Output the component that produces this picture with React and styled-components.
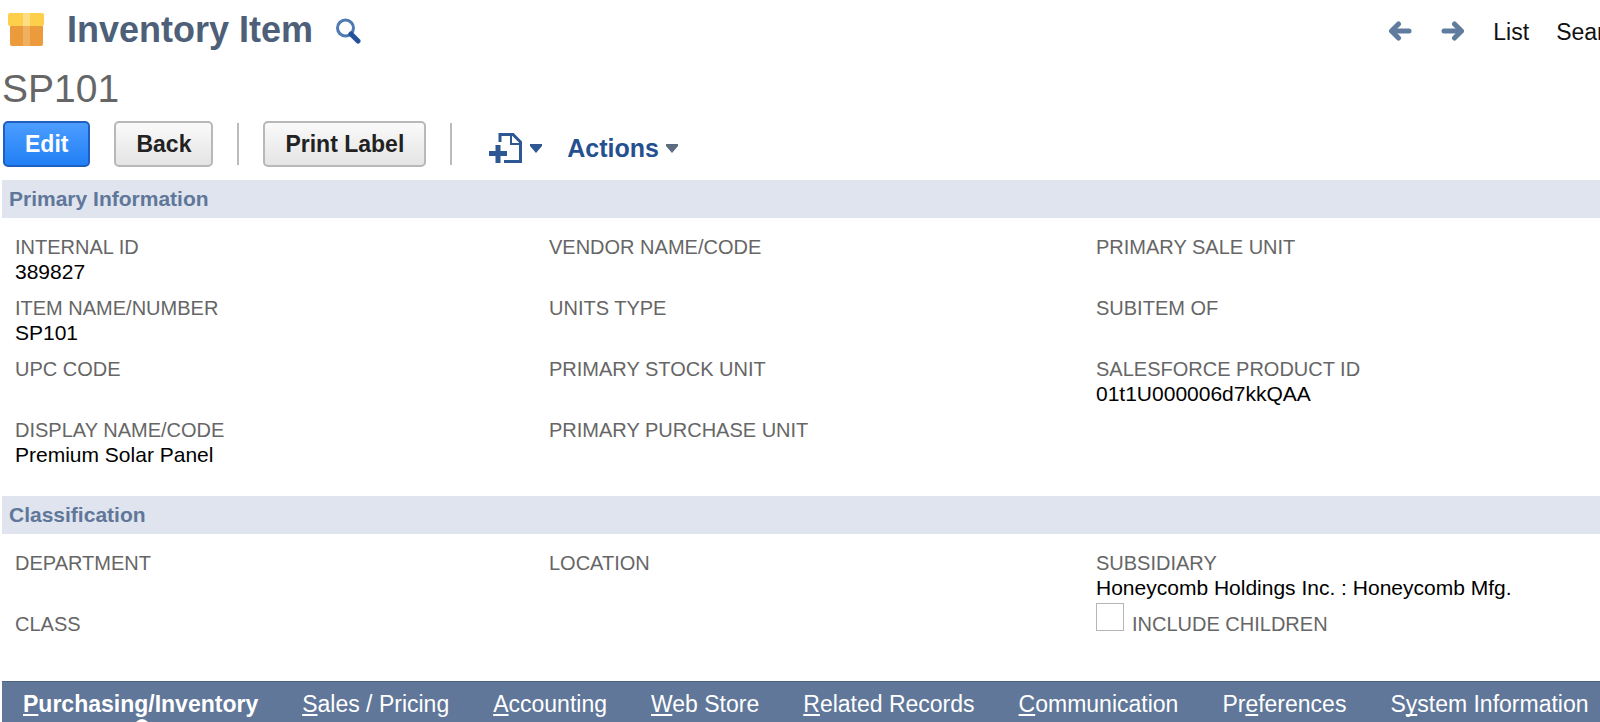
import React from "react";
import styled, { createGlobalStyle } from "styled-components";

const GlobalStyle = createGlobalStyle`
  *, *::before, *::after { box-sizing: border-box; }
  body {
    margin: 0;
    background: #fff;
    color: #000;
    font-family: "Liberation Sans", Arial, sans-serif;
    overflow-x: hidden;
  }
`;

const Page = styled.main`
  overflow: hidden;
`;

const Header = styled.header`
  display: flex;
  align-items: center;
  height: 60px;
  padding-left: 8px;
`;

const Title = styled.h1`
  margin: 0 22px 0 22px;
  font-size: 36px;
  line-height: 40px;
  font-weight: bold;
  color: #4d5f79;
  white-space: nowrap;
`;

const IconButton = styled.button`
  display: flex;
  align-items: center;
  gap: 8px;
  padding: 0;
  border: 0;
  background: none;
  cursor: pointer;
`;

const HeaderNav = styled.nav`
  display: flex;
  align-items: center;
  gap: 27px;
  margin: 3px -29px 0 auto;
`;

const NavLink = styled.a`
  font-size: 23px;
  line-height: 28px;
  color: #111;
  text-decoration: none;
`;

const RecordName = styled.h2`
  margin: 0;
  padding: 6px 2px 0;
  font-size: 39px;
  line-height: 46px;
  font-weight: normal;
  color: #666;
`;

const Toolbar = styled.div`
  display: flex;
  align-items: center;
  height: 68px;
  padding: 0 3px 4px;
`;

const Button = styled.button`
  height: 46px;
  padding: 0 20px;
  border: 2px solid ${(p) => (p.$primary ? "#1f5fc0" : "#b8b8b8")};
  border-radius: 5px;
  background: ${(p) =>
    p.$primary
      ? "linear-gradient(#4c9dff, #2180f5)"
      : "linear-gradient(#fafafa, #e4e4e4)"};
  color: ${(p) => (p.$primary ? "#fff" : "#222")};
  font: bold 23px "Liberation Sans", Arial, sans-serif;
  cursor: pointer;

  & + & { margin-left: 24px; }
`;

const Divider = styled.span`
  width: 2px;
  height: 42px;
  margin: 0 24px;
  background: #bbb;
`;

const ToolbarMenus = styled.div`
  display: flex;
  align-items: center;
  gap: 25px;
  margin: 8px 0 0 13px;
`;

const MenuButton = styled(IconButton)`
  gap: 7px;
  font: bold 25px "Liberation Sans", Arial, sans-serif;
  color: #24508f;
`;

const SectionTitle = styled.h3`
  margin: 0 0 0 2px;
  padding: 0 7px;
  background: #dfe4ef;
  color: #607799;
  font-size: 21px;
  line-height: 38px;
  font-weight: bold;
`;

const Fields = styled.div`
  display: grid;
  grid-template-columns: 534fr 547fr 504fr;
  padding: 17px 0 ${(p) => p.$bottom}px 15px;
`;

const Column = styled.dl`
  margin: 0;
`;

const FieldBox = styled.div`
  height: ${(p) => (p.$compact ? 52 : 61)}px;
  white-space: nowrap;
`;

const FieldLabel = styled.dt`
  font-size: 20px;
  line-height: 24px;
  color: #666;
`;

const FieldValue = styled.dd`
  margin: 0;
  font-size: 21px;
  line-height: 26px;
  color: #000;
`;

const CheckRow = styled.div`
  display: flex;
  align-items: flex-end;
  gap: 8px;
`;

const Checkbox = styled.input`
  appearance: none;
  width: 28px;
  height: 28px;
  margin: 0;
  border: 1px solid #b5b5b5;
  background: #fff;
`;

const CheckLabel = styled.label`
  font-size: 20px;
  line-height: 14px;
  color: #666;
`;

const Tabs = styled.nav`
  display: flex;
  gap: 44px;
  height: 41px;
  margin-left: 2px;
  padding: 0 21px;
  border-top: 1px solid #4c6585;
  background: #607799;
`;

const Tab = styled.a`
  position: relative;
  font-size: 23px;
  line-height: 44px;
  font-weight: ${(p) => (p.$active ? "bold" : "normal")};
  color: #fff;
  text-decoration: none;
  white-space: nowrap;
`;

const AccessKey = styled.span`
  text-decoration: underline;
  text-decoration-thickness: 2px;
  text-decoration-skip-ink: none;
  text-underline-offset: 2px;
`;

const Pointer = styled.svg`
  position: absolute;
  left: 50%;
  bottom: 0;
  margin-left: -6px;
`;

const BoxIcon = () => (
  <svg width="37" height="34" viewBox="0 0 37 34" aria-hidden="true">
    <rect x="2" y="12" width="33" height="21" rx="2" fill="#eb9b3c" />
    <rect x="15" y="12" width="7" height="21" fill="#f0b060" />
    <rect x="0" y="0" width="36" height="13" rx="2" fill="#fdcf4b" />
    <rect x="15" y="0" width="7" height="13" fill="#fedd83" />
  </svg>
);

const SearchIcon = () => (
  <svg width="26" height="28" viewBox="0 -2 26 28" fill="none" aria-hidden="true">
    <circle cx="10.500" cy="10" r="8" stroke="#4f79b2" strokeWidth="3" />
    <path d="M16 16L23 23" stroke="#24529a" strokeWidth="5" strokeLinecap="round" />
  </svg>
);

const ArrowIcon = ({ right }) => (
  <svg width="26" height="22" viewBox="0 0 26 22" fill="none" stroke="#5f7c9f" strokeWidth="5" strokeLinecap="round" strokeLinejoin="round" aria-hidden="true">
    <g transform={right ? "translate(26 0) scale(-1 1)" : undefined}>
      <path d="M5 10H22" />
      <path d="M11.500 3L4.500 10L11.500 17" />
    </g>
  </svg>
);

const NewRecordIcon = () => (
  <svg width="34" height="30" viewBox="0 0 34 30" fill="none" stroke="#2d5893" aria-hidden="true">
    <path d="M11 9V1.500H24L31.500 9V28.500H15" strokeWidth="3" />
    <path d="M22 2V11H31" strokeWidth="2" />
    <path d="M0 20.500H18M9 12V30" strokeWidth="5" />
  </svg>
);

const Caret = ({ color }) => (
  <svg width="12" height="9" viewBox="0 0 12 9" aria-hidden="true">
    <path d="M0 0H12V2L6 9L0 2Z" fill={color} />
  </svg>
);

const Field = ({ label, value, compact }) => (
  <FieldBox $compact={compact}>
    <FieldLabel>{label}</FieldLabel>
    <FieldValue>{value}</FieldValue>
  </FieldBox>
);

const primaryColumns = [
  [
    ["INTERNAL ID", "389827"],
    ["ITEM NAME/NUMBER", "SP101"],
    ["UPC CODE"],
    ["DISPLAY NAME/CODE", "Premium Solar Panel"],
  ],
  [["VENDOR NAME/CODE"], ["UNITS TYPE"], ["PRIMARY STOCK UNIT"], ["PRIMARY PURCHASE UNIT"]],
  [["PRIMARY SALE UNIT"], ["SUBITEM OF"], ["SALESFORCE PRODUCT ID", "01t1U000006d7kkQAA"]],
];

const tabs = [
  ["", "P", "urchasing/Inventory"],
  ["", "S", "ales / Pricing"],
  ["", "A", "ccounting"],
  ["", "W", "eb Store"],
  ["", "R", "elated Records"],
  ["", "C", "ommunication"],
  ["Pr", "e", "ferences"],
  ["S", "y", "stem Information"],
];

export default function App() {
  return (
    <Page>
      <GlobalStyle />
      <Header>
        <BoxIcon />
        <Title>Inventory Item</Title>
        <IconButton aria-label="Search records">
          <SearchIcon />
        </IconButton>
        <HeaderNav>
          <IconButton aria-label="Previous"><ArrowIcon /></IconButton>
          <IconButton aria-label="Next"><ArrowIcon right /></IconButton>
          <NavLink href="#list">List</NavLink>
          <NavLink href="#search">Search</NavLink>
        </HeaderNav>
      </Header>
      <RecordName>SP101</RecordName>
      <Toolbar>
        <Button $primary>Edit</Button>
        <Button>Back</Button>
        <Divider />
        <Button>Print Label</Button>
        <Divider />
        <ToolbarMenus>
          <MenuButton aria-label="New record">
            <NewRecordIcon />
            <Caret color="#2d5893" />
          </MenuButton>
          <MenuButton>
            Actions
            <Caret color="#5d6b80" />
          </MenuButton>
        </ToolbarMenus>
      </Toolbar>

      <SectionTitle>Primary Information</SectionTitle>
      <Fields $bottom={17}>
        {primaryColumns.map((column, i) => (
          <Column key={i}>
            {column.map(([label, value]) => (
              <Field key={label} label={label} value={value} />
            ))}
          </Column>
        ))}
      </Fields>

      <SectionTitle>Classification</SectionTitle>
      <Fields $bottom={8}>
        <Column>
          <Field label="DEPARTMENT" />
          <Field label="CLASS" />
        </Column>
        <Column>
          <Field label="LOCATION" />
        </Column>
        <div>
          <Column>
            <Field label="SUBSIDIARY" value="Honeycomb Holdings Inc. : Honeycomb Mfg." compact />
          </Column>
          <CheckRow>
            <Checkbox type="checkbox" id="include-children" />
            <CheckLabel htmlFor="include-children">INCLUDE CHILDREN</CheckLabel>
          </CheckRow>
        </div>
      </Fields>

      <Tabs>
        {tabs.map(([before, key, after], i) => (
          <Tab key={after} href="#tab" $active={i === 0}>
            {before}
            <AccessKey>{key}</AccessKey>
            {after}
            {i === 0 && (
              <Pointer width="14" height="3" viewBox="0 0 14 3" aria-hidden="true">
                <path d="M1 3Q4 0 7 0Q10 0 13 3Z" fill="#fff" />
              </Pointer>
            )}
          </Tab>
        ))}
      </Tabs>
    </Page>
  );
}
